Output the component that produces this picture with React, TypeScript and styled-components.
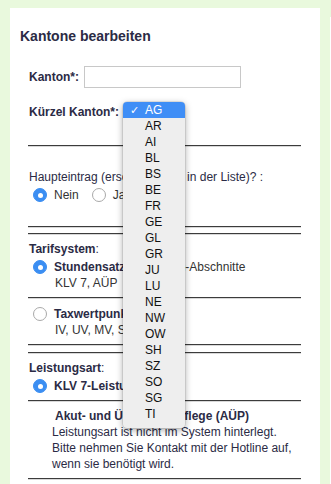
import React from 'react';
import styled, { createGlobalStyle } from 'styled-components';

const GlobalStyle = createGlobalStyle`
  html, body {
    margin: 0;
    padding: 0;
    background: #e9f9dd;
  }
  body {
    font-family: "Liberation Sans", Arial, sans-serif;
    font-size: 12px;
    color: #2b2b45;
  }
`;

const Page = styled.div`
  display: flex;
  gap: 10px;
  padding: 8px 0 0 10px;
  height: 476px;
  overflow: hidden;
`;

const Panel = styled.div`
  position: relative;
  width: 310px;
  flex: none;
  background: #fff;
  padding: 20px 0 0 0;
  box-sizing: border-box;
`;

const SidePanel = styled.div`
  flex: 1;
  margin-top: 9px;
  background: #fff;
`;

const Title = styled.h2`
  margin: 0 0 0 10px;
  font-size: 14px;
  line-height: 16px;
  font-weight: bold;
  color: #2b2b45;
`;

const Form = styled.div`
  margin: 0 19px 0 18px;
  display: flex;
  flex-direction: column;
`;

const FieldRow = styled.div<{ $top: number }>`
  display: flex;
  align-items: center;
  gap: 5px;
  height: 22px;
  margin-top: ${(p) => p.$top}px;
  padding-left: 1px;
`;

const Label = styled.span`
  font-weight: bold;
  color: #2b2b45;
`;

const TextInput = styled.input`
  width: 157px;
  height: 22px;
  box-sizing: border-box;
  border: 1px solid #c8c8c8;
  padding: 0 4px;
  font: inherit;
`;

const Rule = styled.hr<{ $top: number }>`
  margin: ${(p) => p.$top}px 0 0 0;
  height: 0;
  border: none;
  border-top: 1px solid #3c3c3c;
  border-bottom: 1px solid #d8d8d8;
`;

const Text = styled.div<{ $top?: number; $indent?: number }>`
  line-height: 16px;
  margin-top: ${(p) => p.$top ?? 0}px;
  padding-left: ${(p) => p.$indent ?? 1}px;
  white-space: nowrap;
  color: #2b2b45;
`;

const Sub = styled.div<{ $indent: number }>`
  line-height: 16px;
  padding-left: ${(p) => p.$indent}px;
  color: #333;
  white-space: nowrap;
`;

const RadioRow = styled.div<{ $top: number }>`
  display: flex;
  align-items: center;
  height: 16px;
  margin-top: ${(p) => p.$top}px;
  padding-left: 5px;
  white-space: nowrap;
`;

const RadioItem = styled.label`
  display: flex;
  align-items: center;
  gap: 7px;
  margin-right: 13px;
  color: #333;
`;

const RadioDot = styled.span<{ $on?: boolean }>`
  box-sizing: border-box;
  width: 14px;
  height: 14px;
  border-radius: 50%;
  flex: none;
  background: ${(p) => (p.$on ? '#3b8ef2' : '#fff')};
  border: 1px solid ${(p) => (p.$on ? '#3b8ef2' : '#a9a9a9')};
  display: flex;
  align-items: center;
  justify-content: center;
  &::after {
    content: '';
    width: 5px;
    height: 5px;
    border-radius: 50%;
    background: #fff;
    display: ${(p) => (p.$on ? 'block' : 'none')};
  }
`;

const Strong = styled.b`
  font-weight: bold;
  color: #2b2b45;
`;

const Menu = styled.div`
  position: absolute;
  left: 113px;
  top: 94px;
  width: 62px;
  padding: 0 0 6px 0;
  background: #eeeeee;
  border-radius: 4px;
  box-shadow: 0 2px 7px rgba(0, 0, 0, 0.35), 0 0 0 0.5px rgba(0, 0, 0, 0.15);
  overflow: hidden;
`;

const MenuItem = styled.div<{ $active?: boolean }>`
  position: relative;
  height: 16px;
  line-height: 16px;
  padding-left: 22px;
  font-size: 12px;
  color: ${(p) => (p.$active ? '#fff' : '#111')};
  background: ${(p) => (p.$active ? '#3f8ef6' : 'transparent')};
`;

const Check = styled.span`
  position: absolute;
  left: 7px;
  top: 0;
  font-size: 11px;
`;

const cantons = [
  'AG', 'AR', 'AI', 'BL', 'BS', 'BE', 'FR', 'GE', 'GL', 'GR',
  'JU', 'LU', 'NE', 'NW', 'OW', 'SH', 'SZ', 'SO', 'SG', 'TI',
];

export default function App() {
  return (
    <>
      <GlobalStyle />
      <Page>
        <Panel>
          <Title>Kantone bearbeiten</Title>
          <Form>
            <FieldRow $top={22}>
              <Label>Kanton*:</Label>
              <TextInput />
            </FieldRow>
            <FieldRow $top={13}>
              <Label>Kürzel Kanton*:</Label>
            </FieldRow>
            <Rule $top={22} />

            <Text $top={22}>Haupteintrag (erscheint oben in der Liste)? :</Text>
            <RadioRow $top={2}>
              <RadioItem>
                <RadioDot $on />
                Nein
              </RadioItem>
              <RadioItem>
                <RadioDot />
                Ja
              </RadioItem>
            </RadioRow>
            <Rule $top={23} />
            <Rule $top={5} />

            <Text $top={6}>
              <Strong>Tarifsystem</Strong>:
            </Text>
            <RadioRow $top={2}>
              <RadioItem>
                <RadioDot $on />
                <span>
                  <Strong>Stundensatz</Strong>: 5-Minuten-Abschnitte
                </span>
              </RadioItem>
            </RadioRow>
            <Sub $indent={27}>KLV 7, AÜP</Sub>
            <Rule $top={6} />
            <RadioRow $top={7}>
              <RadioItem>
                <RadioDot />
                <span>
                  <Strong>Taxwertpunkte</Strong>
                </span>
              </RadioItem>
            </RadioRow>
            <Sub $indent={27}>IV, UV, MV, Selbstzahler</Sub>
            <Rule $top={6} />
            <Rule $top={6} />

            <Text $top={6}>
              <Strong>Leistungsart</Strong>:
            </Text>
            <RadioRow $top={2}>
              <RadioItem>
                <RadioDot $on />
                <Strong>KLV 7-Leistungen</Strong>
              </RadioItem>
            </RadioRow>
            <Rule $top={6} />
            <Text $top={6} $indent={27}>
              <Strong>Akut- und Übergangspflege (AÜP)</Strong>
            </Text>
            <Text $indent={24}>Leistungsart ist nicht im System hinterlegt.</Text>
            <Text $indent={24}>Bitte nehmen Sie Kontakt mit der Hotline auf,</Text>
            <Text $indent={24}>wenn sie benötigt wird.</Text>
            <Rule $top={6} />
          </Form>

          <Menu>
            {cantons.map((c, i) => (
              <MenuItem key={c} $active={i === 0}>
                {i === 0 && <Check>✓</Check>}
                {c}
              </MenuItem>
            ))}
          </Menu>
        </Panel>
        <SidePanel />
      </Page>
    </>
  );
}
